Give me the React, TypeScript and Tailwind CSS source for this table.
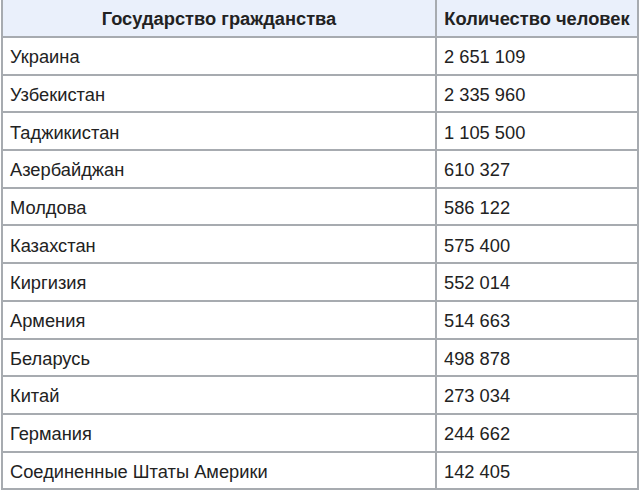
const rows: [string, string][] = [
  ["Украина", "2 651 109"],
  ["Узбекистан", "2 335 960"],
  ["Таджикистан", "1 105 500"],
  ["Азербайджан", "610 327"],
  ["Молдова", "586 122"],
  ["Казахстан", "575 400"],
  ["Киргизия", "552 014"],
  ["Армения", "514 663"],
  ["Беларусь", "498 878"],
  ["Китай", "273 034"],
  ["Германия", "244 662"],
  ["Соединенные Штаты Америки", "142 405"],
];

export default function App() {
  return (
    <div
      className="w-[640px] h-[490px] overflow-hidden bg-white text-[#222] text-[18.3px]"
      style={{ fontFamily: '"Liberation Sans", Arial, sans-serif' }}
    >
      <div className="ml-[1px] w-[638px] border-l-2 border-r-2 border-[#a7abb0]">
        <div className="flex h-[38px] bg-[#eaf0fb] border-b-2 border-[#a7abb0] font-bold">
          <div className="w-[434px] border-r-2 border-[#a7abb0] flex items-center justify-center pt-[1px]">
            Государство гражданства
          </div>
          <div className="flex-1 flex items-center justify-center pt-[1px]">Количество человек</div>
        </div>
        {rows.map(([c, n]) => (
          <div key={c} className="flex h-[37.7px] border-b-2 border-[#a7abb0]">
            <div className="w-[434px] border-r-2 border-[#a7abb0] flex items-center pl-[7px] pt-[2px]">{c}</div>
            <div className="flex-1 flex items-center pl-[7px] pt-[2px]">{n}</div>
          </div>
        ))}
      </div>
    </div>
  );
}
